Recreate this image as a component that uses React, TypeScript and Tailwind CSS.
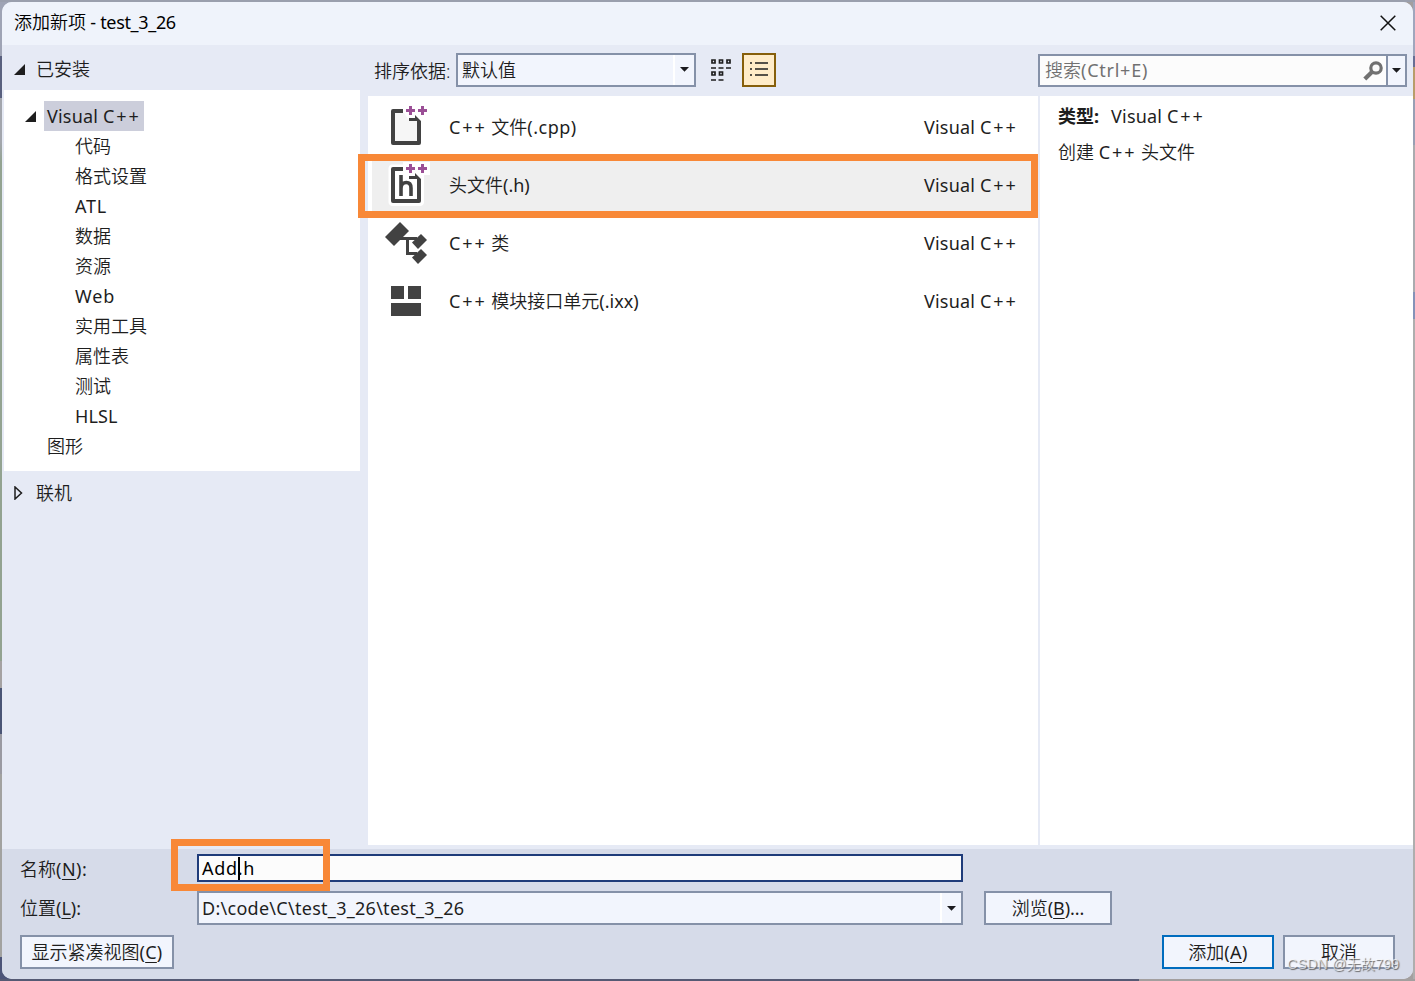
import React, { FC, ReactNode } from "react";

type TextProps = { children: ReactNode; className?: string };

const treeItems = [
  { label: "代码" },
  { label: "格式设置" },
  { label: "ATL", style: "font-normal tracking-[0.8px]" },
  { label: "数据" },
  { label: "资源" },
  { label: "Web", style: "font-normal tracking-[0.8px]" },
  { label: "实用工具" },
  { label: "属性表" },
  { label: "测试" },
  { label: "HLSL", style: "font-normal tracking-[0.1px]" },
];

const En: FC<TextProps> = ({ children, className = "tracking-[1.9px]" }) => (
  <span className={`font-normal ${className}`}>{children}</span>
);

const VisualCpp: FC = () => (
  <>
    <En className="tracking-[0.2px]">Visual </En>
    <En>C++</En>
  </>
);

const CaretIcon: FC = () => (
  <svg width="9" height="5" viewBox="0 0 9 5" fill="#1b1b1f">
    <path d="M0 0H9L4.5 4.8Z" />
  </svg>
);

const ExpandedIcon: FC = () => (
  <svg width="11" height="11" viewBox="0 0 11 11" fill="#1e1e1e">
    <path d="M11 0V11H0Z" />
  </svg>
);

const CollapsedIcon: FC = () => (
  <svg width="9" height="14" viewBox="0 0 9 14" fill="none" stroke="#1e1e1e" strokeWidth="1.5">
    <path d="M1 1V13L7.5 7Z" />
  </svg>
);

const FileIcon: FC<{ header?: boolean }> = ({ header }) => (
  <svg width="42" height="45" viewBox="-1 -2 42 45" className="overflow-visible">
    {header && (
      <path
        fill="#fff"
        d="M2 0.5H14V-2H41V11H35V39Q34 42 31 42H3Q-0.5 41 -0.5 38V4Q0 1 2 0.5Z"
      />
    )}
    <path fill={header ? "#fff" : "#f6f6f6"} d="M6 7H15L19 13L28 15V35H6Z" />
    <path
      fill="#424242"
      d="M4 3H14V7H6V35H28V15H20V12H26V9L32 15V37Q32 39 30 39H4Q2 39 2 37V5Q2 3 4 3Z"
    />
    <path
      fill="#9b4f96"
      d="M20 0h3v3h3v3h-3v3h-3v-3h-3v-3h3zM32 0h3v3h3v3h-3v3h-3v-3h-3v-3h3z"
    />
    {header && (
      <path
        fill="none"
        stroke="#424242"
        strokeWidth="3.6"
        d="M12 11V32M12 24.5C12 20.5 14.5 18.5 17.3 18.5C20.5 18.5 22 20.5 22 24V32"
      />
    )}
  </svg>
);

const ClassIcon: FC = () => (
  <svg width="42" height="42" viewBox="0 0 42 42" fill="#424242">
    <path d="M15 0L24 9L9 24L0 15Z" />
    <path d="M14 15H32V18H24V30H32V33H21V18H14Z" />
    <path d="M36 12L42 18L33 27L27 20.5Z" />
    <path d="M36 27L42 33L33 42L27 35.5Z" />
  </svg>
);

const ModuleIcon: FC = () => (
  <svg width="30" height="30" viewBox="0 0 30 30" fill="#424242">
    <path d="M0 0H13V13H0ZM17 0H30V13H17ZM0 17H30V30H0Z" />
  </svg>
);

const GridIcon: FC = () => (
  <svg width="20" height="22" viewBox="0 0 20 22" fill="none" stroke="#1e1e1e" strokeWidth="1.7">
    <path d="M1 1h3v3h-3zM8.5 1h3v3h-3zM16 1h3v3h-3zM1 13h3v3h-3zM8.5 13h3v3h-3z" />
    <path d="M0 9h5M7.5 9h5M15 9h5M0 21h5M7.5 21h5" strokeWidth="1.4" />
  </svg>
);

const ListIcon: FC = () => (
  <svg width="18" height="14" viewBox="0 0 18 14" fill="none" stroke="#1e1e1e" strokeWidth="1.5">
    <path d="M0 1h2M5 1h13M0 7h2M5 7h13M0 13h2M5 13h13" />
  </svg>
);

const SearchIcon: FC = () => (
  <svg width="20" height="20" viewBox="0 0 20 20" fill="none" stroke="#717171">
    <circle cx="13" cy="7" r="5.2" strokeWidth="3.2" />
    <path d="M9.2 10.8L1.8 18" strokeWidth="4.2" />
  </svg>
);

const CloseIcon: FC = () => (
  <svg width="16" height="16" viewBox="0 0 16 16" fill="none" stroke="#111" strokeWidth="1.5">
    <path d="M0.7 0.7L15.3 15.3M15.3 0.7L0.7 15.3" />
  </svg>
);

const templates = [
  { icon: <FileIcon />, pad: "pl-[16px] pb-[1px]", name: <><En>C++</En> 文件<En className="tracking-[0.5px]">(.cpp)</En></> },
  { icon: <FileIcon header />, pad: "pl-[16px] pb-[1px]", name: <>头文件<En className="tracking-[0px]">(.h)</En></>, selected: true },
  { icon: <ClassIcon />, pad: "pl-[13px]", name: <><En>C++</En> 类</> },
  { icon: <ModuleIcon />, pad: "pl-[19px]", name: <><En>C++</En> 模块接口单元<En className="tracking-[0px]">(.ixx)</En></> },
];

export default function App() {
  return (
    <div className="relative flex h-[981px] w-[1415px] flex-col overflow-hidden bg-[#9a9fad] pt-[2px] font-['Noto_Sans','Noto_Sans_CJK_SC',sans-serif] text-[18px] leading-[30px] font-[350] text-[#1e1e1e] whitespace-nowrap">
      <div className="flex h-[977px] bg-[linear-gradient(90deg,#555a74_1139px,#a39f9f_1139px)]">
        {/* slices of the editor left visible round the dialog */}
        <div className="-mr-[10px] w-[12px] bg-[linear-gradient(180deg,#9fa4b5_54px,#59607e_54px,#59607e_96px,#a3a6ad_96px,#a3a6ad_140px,#93a391_160px,#93a391_659px,#a5a2a2_659px,#a5a2a2_686px,#4a5575_686px,#4a5575_732px,#9a9aa2_732px,#9a9aa2_772px,#a2a2a0_772px,#a2a2a0_955px,#4c5478_955px)]" />
        <div className="relative flex flex-1 flex-col overflow-hidden rounded-[10px] bg-[#e6eaf5]">
          <header className="flex h-[43px] shrink-0 items-center justify-between bg-[#eff3fb] pr-[17px] pb-[2px] pl-[12px] text-black">
            <p className="pb-[1px]">添加新项<En className="tracking-[-0.33px]"> - test_3_26</En></p>
            <CloseIcon />
          </header>

          <div className="flex h-[804px] shrink-0">
            <aside className="w-[366px] pl-[2px]">
              <div className="flex h-[45px] items-center gap-[11px] pt-[3px] pl-[10px]">
                <ExpandedIcon />
                <p>已安装</p>
              </div>
              <div className="h-[381px] w-[356px] bg-white pt-[11px]">
                <div className="flex items-center gap-[8px] pl-[21px]">
                  <ExpandedIcon />
                  <p className="w-[100px] bg-[#cccedb] pl-[3px]"><VisualCpp /></p>
                </div>
                {treeItems.map((item) => (
                  <p key={item.label} className={`pl-[71px] ${item.style ?? ""}`}>{item.label}</p>
                ))}
                <p className="pl-[43px]">图形</p>
              </div>
              <div className="flex h-[44px] items-center gap-[13px] pl-[10px]">
                <CollapsedIcon />
                <p>联机</p>
              </div>
            </aside>

            <main className="flex w-[672px] flex-col">
              <div className="flex h-[51px] items-center pb-[2px] pl-[6px]">
                <p className="w-[82px] pt-[3px]">排序依据:</p>
                <div className="flex h-[34px] w-[240px] items-center justify-between border-2 border-[#8591a8] bg-[#f2f5fd] pl-[4px]">
                  <p>默认值</p>
                  <div className="flex h-full w-[21px] items-center justify-center border-l-2 border-white">
                    <CaretIcon />
                  </div>
                </div>
                <div className="ml-[15px] flex w-[31px]"><GridIcon /></div>
                <div className="flex size-[34px] items-center justify-center border-2 border-[#865f0b] bg-[#ffecc8] pb-[1px]">
                  <ListIcon />
                </div>
              </div>
              <div className="h-[749px] w-[670px] bg-white pt-[2px] pl-[2px]">
                {templates.map((item, i) => (
                  <div
                    key={i}
                    className={`flex h-[58px] items-center ${item.selected ? "border-l-2 border-white bg-[#efefef]" : "pl-[2px]"}`}
                  >
                    <div className={`w-[77px] ${item.pad}`}>{item.icon}</div>
                    <p className="flex-1">{item.name}</p>
                    <p className="w-[114px]"><VisualCpp /></p>
                  </div>
                ))}
              </div>
            </main>

            <section className="w-[373px]">
              <div className="flex h-[51px] items-center">
                <div className="-ml-[2px] flex h-[33px] w-[369px] items-center border-2 border-[#8591a8] bg-[#fcfcfc] pl-[5px] text-[#717171]">
                  <p className="flex-1 pb-[1px]">搜索<En className="tracking-[0.75px]">(Ctrl+E)</En></p>
                  <SearchIcon />
                  <div className="ml-[3px] flex h-full w-[19px] items-center justify-center border-l-2 border-[#8591a8] bg-[#f2f5fd]">
                    <CaretIcon />
                  </div>
                </div>
              </div>
              <div className="h-[749px] bg-white pt-[5px] pl-[18px]">
                <p><b className="mr-[12px] font-bold">类型:</b><VisualCpp /></p>
                <p className="mt-[6px]">创建 <En>C++</En> 头文件</p>
              </div>
            </section>
          </div>

          <footer className="flex flex-1 flex-col bg-[#d6dbe9] pt-[5px] pl-[18px]">
            <div className="flex h-[28px] items-center">
              <p className="w-[177px] pt-[2px]">名称<En className="tracking-[0.5px]">(<u className="underline-offset-3">N</u>):</En></p>
              <div className="flex h-[28px] w-[766px] items-center border-2 border-[#1f3c7a] bg-[#fcfcfc] pl-[3px] font-normal tracking-[0.7px] text-black">
                <span>Add</span>
                <span className="-mr-[2px] h-[23px] w-[2px] bg-black" />
                <span>.h</span>
              </div>
            </div>
            <div className="mt-[9px] flex h-[34px] items-center">
              <p className="w-[177px]">位置<En className="tracking-[0px]">(<u className="underline-offset-3">L</u>):</En></p>
              <div className="flex h-[34px] w-[766px] items-center justify-between border-2 border-[#8591a8] bg-[#f2f5fd] pl-[3px]">
                <p className="font-normal tracking-[0.28px]">D:\code\C\test_3_26\test_3_26</p>
                <div className="flex h-full w-[21px] items-center justify-center border-l-2 border-white">
                  <CaretIcon />
                </div>
              </div>
              <button className="ml-[21px] h-[34px] w-[128px] border-2 border-[#8591a8] bg-[#f2f5fd]">
                浏览<En className="tracking-[-0.1px]">(<u className="underline-offset-3">B</u>)...</En>
              </button>
            </div>
            <div className="mt-[10px] flex h-[34px]">
              <button className="w-[154px] border-2 border-[#8591a8] bg-[#f2f5fd]">
                显示紧凑视图<En className="tracking-[0.3px]">(<u className="underline-offset-3">C</u>)</En>
              </button>
              <button className="ml-[988px] w-[112px] border-2 border-[#006cbe] bg-[#f2f5fd]">
                添加<En className="tracking-[0.4px]">(<u className="underline-offset-3">A</u>)</En>
              </button>
              <button className="ml-[9px] w-[112px] border-2 border-[#8591a8] bg-[#f2f5fd]">取消</button>
            </div>
          </footer>
        </div>
        <div className="w-[2px] bg-[linear-gradient(180deg,#a0a6bd_54px,#676e94_54px,#676e94_65px,#b89d6b_65px,#b89d6b_97px,#989fb4_97px,#989fb4_143px,#aaabaf_143px,#aaabaf_290px,#8592b8_290px,#8592b8_317px,#aeaeae_317px)]" />
      </div>
      <div className="h-[2px] bg-[linear-gradient(90deg,#555a74_1139px,#a39f9f_1139px)]" />

      {/* highlight frames */}
      <div className="absolute top-[154px] left-[358px] h-[64px] w-[680px] border-[7px] border-[#f88837]" />
      <div className="absolute top-[839px] left-[171px] h-[52px] w-[159px] border-[7px] border-[#f88837]" />
      <p className="absolute top-[954px] left-[1287px] font-['Liberation_Sans','Noto_Sans_CJK_SC',sans-serif] text-[14px] leading-[20px] tracking-[0.3px] text-[#ffffffa0] [text-shadow:1px_1px_1px_#666]">
        CSDN @无故799
      </p>
    </div>
  );
}
